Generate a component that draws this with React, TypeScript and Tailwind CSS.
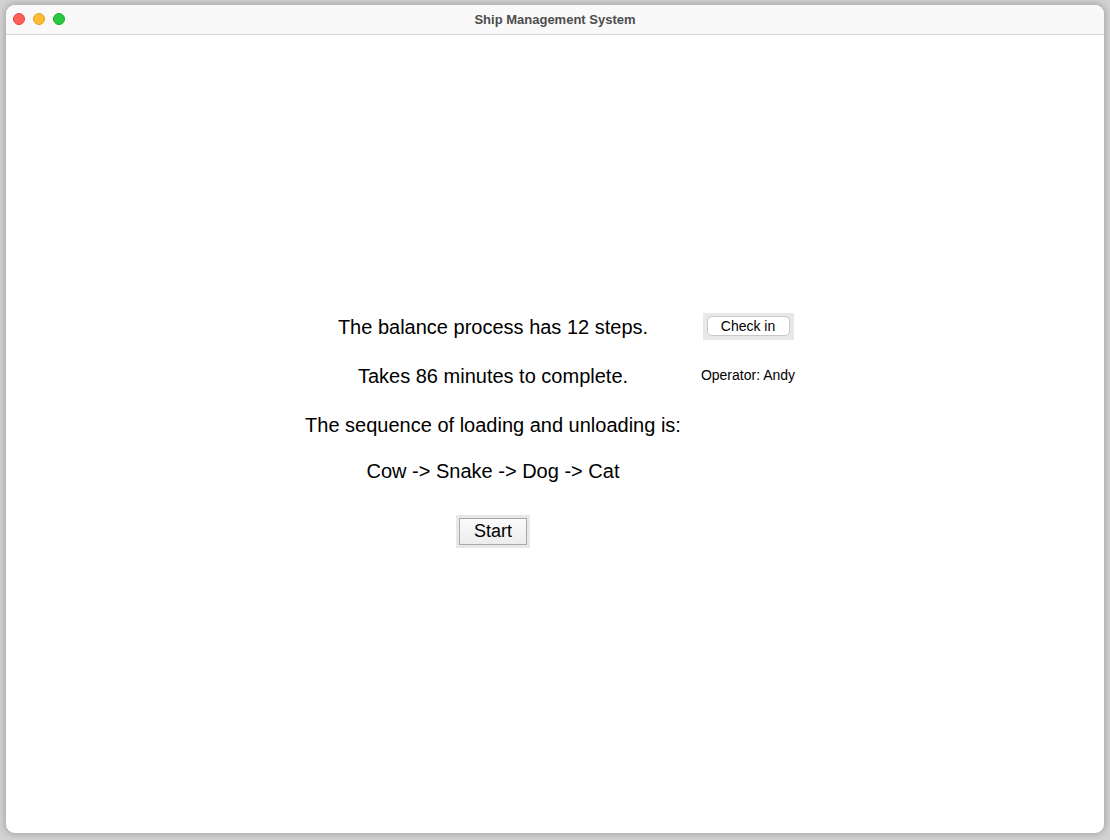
export default function App() {
  const font = { fontFamily: '"Liberation Sans", Arial, sans-serif' };
  return (
    <div className="w-[1110px] h-[840px] bg-[#d2d2d2] pt-[4px] px-[5px] pb-[5px]" style={font}>
      <div className="h-[830px] rounded-[10px] bg-white overflow-hidden border border-[#b9b9b9] shadow-[0_0_6px_rgba(0,0,0,0.25)] flex flex-col">
        <div className="relative h-[30px] shrink-0 bg-[#f9f9f9] border-b border-[#d6d6d6] flex items-center justify-center">
          <div className="absolute left-[7px] top-[8px] flex gap-[8px]">
            <span className="w-[12px] h-[12px] rounded-full bg-[#fe5f57] border border-[#e0443e]" />
            <span className="w-[12px] h-[12px] rounded-full bg-[#febc2e] border border-[#dea123]" />
            <span className="w-[12px] h-[12px] rounded-full bg-[#28c840] border border-[#1aab29]" />
          </div>
          <span className="text-[13px] font-bold text-[#4d4d4d]">Ship Management System</span>
        </div>
        <div className="flex-1 pt-[267px] pl-[287px]">
          <div className="grid grid-cols-[400px_110px] text-black">
            <div className="h-[49px] flex items-center justify-center text-[20px]">The balance process has 12 steps.</div>
            <div className="h-[49px] flex items-center justify-center">
              <div className="bg-[#e8e8e8] px-[4px] pt-[3px] pb-[4px]">
                <button className="w-[83px] h-[20px] bg-white rounded-[5px] border border-[#c8c8c8] text-[14px] leading-none flex items-center justify-center">Check in</button>
              </div>
            </div>
            <div className="h-[49px] flex items-center justify-center text-[20px]">Takes 86 minutes to complete.</div>
            <div className="h-[49px] flex items-center justify-center text-[14px]">Operator: Andy</div>
            <div className="h-[49px] flex items-center justify-center text-[20px]">The sequence of loading and unloading is:</div>
            <div className="h-[49px]" />
            <div className="h-[43px] flex items-center justify-center text-[20px]">Cow -&gt; Snake -&gt; Dog -&gt; Cat</div>
            <div className="h-[43px]" />
            <div className="h-[78px] flex items-center justify-center">
              <div className="bg-[#e8e8e8] p-[3px]">
                <button className="w-[68px] h-[27px] border border-[#a8a8a8] bg-gradient-to-b from-[#fbfbfb] to-[#ececec] text-[18px] leading-none flex items-center justify-center">Start</button>
              </div>
            </div>
            <div className="h-[78px]" />
          </div>
        </div>
      </div>
    </div>
  );
}
